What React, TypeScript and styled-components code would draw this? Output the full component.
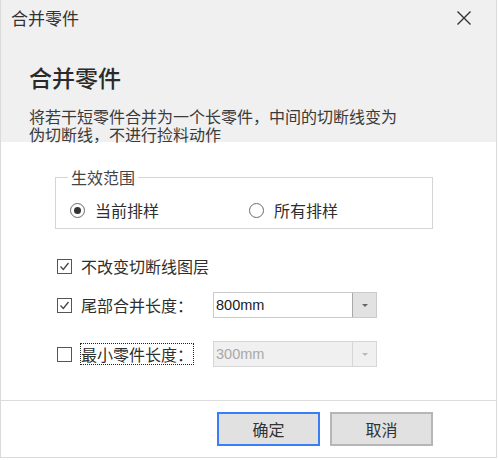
import React from 'react'
import styled, { createGlobalStyle } from 'styled-components'

const GlobalStyle = createGlobalStyle`
  html, body {
    margin: 0;
    padding: 0;
    background: #ffffff;
  }
  body {
    font-family: "Noto Sans CJK SC", "Noto Sans", sans-serif;
    color: #333;
  }
`

const Window = styled.div`
  width: 497px;
  height: 458px;
  box-sizing: border-box;
  border: 1px solid #dadada;
  border-top: none;
  display: flex;
  flex-direction: column;
  background: #fff;
`

const TitleBar = styled.div`
  height: 36px;
  flex: none;
  display: flex;
  align-items: center;
  justify-content: space-between;
  padding: 0 24px 0 10px;
  background: #f0f0f0;
  font-size: 17px;
  line-height: 20px;
  color: #333;
`

const CloseButton = styled.button`
  width: 16px;
  height: 16px;
  padding: 0;
  border: none;
  background: none;
  display: flex;
  svg {
    display: block;
  }
`

const Header = styled.div`
  height: 106px;
  flex: none;
  box-sizing: border-box;
  padding: 26px 28px 0;
  background: #f0f0f0;
`

const Heading = styled.h1`
  margin: 0;
  font-size: 23px;
  line-height: 30px;
  font-weight: 500;
  color: #2a2a2a;
`

const Description = styled.p`
  margin: 15px 0 0;
  width: 382px;
  font-size: 16px;
  line-height: 18px;
  color: #3a3a3a;
`

const Body = styled.div`
  height: 258px;
  flex: none;
  box-sizing: border-box;
  padding: 25px 0 0 54px;
`

const Group = styled.fieldset`
  width: 378px;
  box-sizing: border-box;
  margin: 0;
  min-width: 0;
  padding: 13px 12px 8px;
  border: 1px solid #d5d5d5;
`

const Legend = styled.legend`
  padding: 0 3px;
  font-size: 16px;
  line-height: 20px;
  color: #444;
`

const RadioRow = styled.div`
  display: flex;
  align-items: center;
  height: 20px;
`

const RadioItem = styled.label<{ $width?: number }>`
  display: flex;
  align-items: center;
  gap: 10px;
  width: ${p => (p.$width ? `${p.$width}px` : 'auto')};
  margin-left: 2px;
  font-size: 16px;
  line-height: 20px;
  color: #2e2e2e;
`

const RadioCircle = styled.span<{ $checked?: boolean }>`
  width: 15px;
  height: 15px;
  box-sizing: border-box;
  border: 1.5px solid #6a6a6a;
  border-radius: 50%;
  display: flex;
  align-items: center;
  justify-content: center;
  background: #fff;
  &::after {
    content: '';
    width: 7px;
    height: 7px;
    border-radius: 50%;
    background: ${p => (p.$checked ? '#333' : 'transparent')};
  }
`

const OptionRow = styled.div<{ $top: number }>`
  display: flex;
  align-items: center;
  height: 26px;
  margin-top: ${p => p.$top}px;
`

const CheckLabel = styled.label<{ $width?: number; $focused?: boolean }>`
  display: flex;
  align-items: center;
  gap: 9px;
  width: ${p => (p.$width ? `${p.$width}px` : 'auto')};
  font-size: 16px;
  line-height: 20px;
  color: #2e2e2e;
  span.text {
    outline: ${p => (p.$focused ? '1px dotted #222' : 'none')};
    outline-offset: 0;
  }
`

const CheckBox = styled.span`
  width: 15px;
  height: 15px;
  flex: none;
  box-sizing: border-box;
  border: 1px solid #555;
  background: #fff;
  display: flex;
  align-items: center;
  justify-content: center;
  margin-left: 2px;
`

const Combo = styled.div<{ $disabled?: boolean }>`
  width: 164px;
  height: 26px;
  box-sizing: border-box;
  display: flex;
  border: 1px solid ${p => (p.$disabled ? '#d6d6d6' : '#cacaca')};
  background: ${p => (p.$disabled ? '#f0f0f0' : '#fff')};
`

const ComboText = styled.div<{ $disabled?: boolean }>`
  flex: 1;
  padding-left: 2px;
  font-family: "Liberation Sans", Arial, sans-serif;
  font-size: 14.5px;
  line-height: 24px;
  color: ${p => (p.$disabled ? '#a8a8a8' : '#1a1a2a')};
`

const ComboArrow = styled.div<{ $disabled?: boolean }>`
  width: 23px;
  display: flex;
  align-items: center;
  justify-content: center;
  border-left: 1px solid ${p => (p.$disabled ? '#d6d6d6' : '#a8a8a8')};
  background: ${p => (p.$disabled ? '#f0f0f0' : '#e2e2e2')};
  &::after {
    content: '';
    border-left: 3px solid transparent;
    border-right: 3px solid transparent;
    border-top: 3px solid ${p => (p.$disabled ? '#b8b8b8' : '#666')};
  }
`

const Footer = styled.div`
  flex: 1;
  border-top: 1px solid #dcdcdc;
  display: flex;
  justify-content: flex-end;
  align-items: flex-start;
  gap: 10px;
  padding: 11px 63px 0 0;
`

const Button = styled.button<{ $primary?: boolean }>`
  width: 103px;
  height: 34px;
  box-sizing: border-box;
  border: 2px solid ${p => (p.$primary ? '#3a7ef4' : '#b6b6b6')};
  background: #e1e1e1;
  font-family: "Noto Sans CJK SC", sans-serif;
  font-size: 16px;
  line-height: 20px;
  color: #333;
  padding: 0;
`

const CheckMark = () => (
  <svg width="11" height="11" viewBox="0 0 11 11">
    <polyline points="1.5,5.5 4.3,8.5 9.5,2" fill="none" stroke="#444" strokeWidth="1.3" />
  </svg>
)

const Check = ({ checked }: { checked?: boolean }) => (
  <CheckBox>{checked && <CheckMark />}</CheckBox>
)

export default function App() {
  return (
    <>
      <GlobalStyle />
      <Window>
        <TitleBar>
          <span>合并零件</span>
          <CloseButton aria-label="关闭">
            <svg width="16" height="16" viewBox="0 0 16 16">
              <path d="M1.5 1.5 L14.5 14.5 M14.5 1.5 L1.5 14.5" stroke="#333" strokeWidth="1.4" />
            </svg>
          </CloseButton>
        </TitleBar>
        <Header>
          <Heading>合并零件</Heading>
          <Description>将若干短零件合并为一个长零件，中间的切断线变为伪切断线，不进行捡料动作</Description>
        </Header>
        <Body>
          <Group>
            <Legend>生效范围</Legend>
            <RadioRow>
              <RadioItem $width={177}>
                <RadioCircle $checked />
                当前排样
              </RadioItem>
              <RadioItem>
                <RadioCircle />
                所有排样
              </RadioItem>
            </RadioRow>
          </Group>
          <OptionRow $top={24}>
            <CheckLabel>
              <Check checked />
              <span className="text">不改变切断线图层</span>
            </CheckLabel>
          </OptionRow>
          <OptionRow $top={13}>
            <CheckLabel $width={158}>
              <Check checked />
              <span className="text">尾部合并长度：</span>
            </CheckLabel>
            <Combo>
              <ComboText>800mm</ComboText>
              <ComboArrow />
            </Combo>
          </OptionRow>
          <OptionRow $top={23}>
            <CheckLabel $width={158} $focused>
              <Check />
              <span className="text">最小零件长度：</span>
            </CheckLabel>
            <Combo $disabled>
              <ComboText $disabled>300mm</ComboText>
              <ComboArrow $disabled />
            </Combo>
          </OptionRow>
        </Body>
        <Footer>
          <Button $primary>确定</Button>
          <Button>取消</Button>
        </Footer>
      </Window>
    </>
  )
}
